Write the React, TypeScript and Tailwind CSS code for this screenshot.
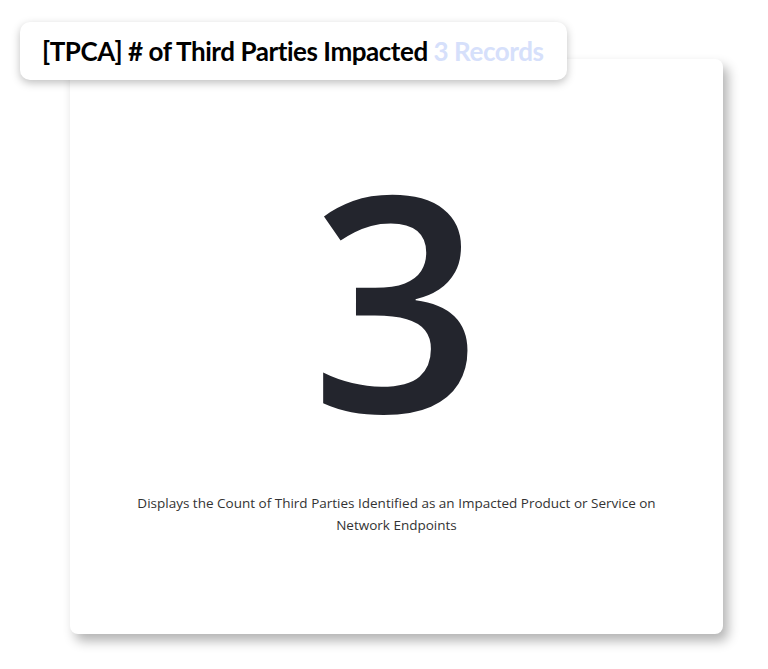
export default function App() {
  return (
    <div className="min-h-screen bg-white">
      <div className="relative pt-[59px] pl-[70px]">
        {/* Card */}
        <div className="flex h-[575px] w-[653px] flex-col items-center rounded-lg bg-white shadow-[5px_7px_12px_rgba(0,0,0,0.3)]">
          <div
            className="mt-[87px] leading-none text-[#23252d]"
            style={{ fontFamily: '"Open Sans", "Noto Sans", sans-serif', fontSize: "300px", fontWeight: 650 }}
          >
            3
          </div>
          <p
            className="mt-[46px] w-[560px] text-center text-[13.5px] leading-[22px] text-[#333]"
            style={{ fontFamily: '"Open Sans", "Noto Sans", sans-serif' }}
          >
            Displays the Count of Third Parties Identified as an Impacted Product or Service on Network Endpoints
          </p>
        </div>

        {/* Title pill */}
        <div className="absolute left-[20px] top-[22px] flex h-[58px] w-[547px] items-center rounded-[10px] bg-white pl-[22px] shadow-[0_3px_8px_rgba(0,0,0,0.25)]">
          <span
            className="text-[26px] font-bold tracking-[-0.45px] text-black"
            style={{ fontFamily: "Lato, sans-serif" }}
          >
            [TPCA] # of Third Parties Impacted <span className="text-[#d6e0fb]">3 Records</span>
          </span>
        </div>
      </div>
    </div>
  );
}
